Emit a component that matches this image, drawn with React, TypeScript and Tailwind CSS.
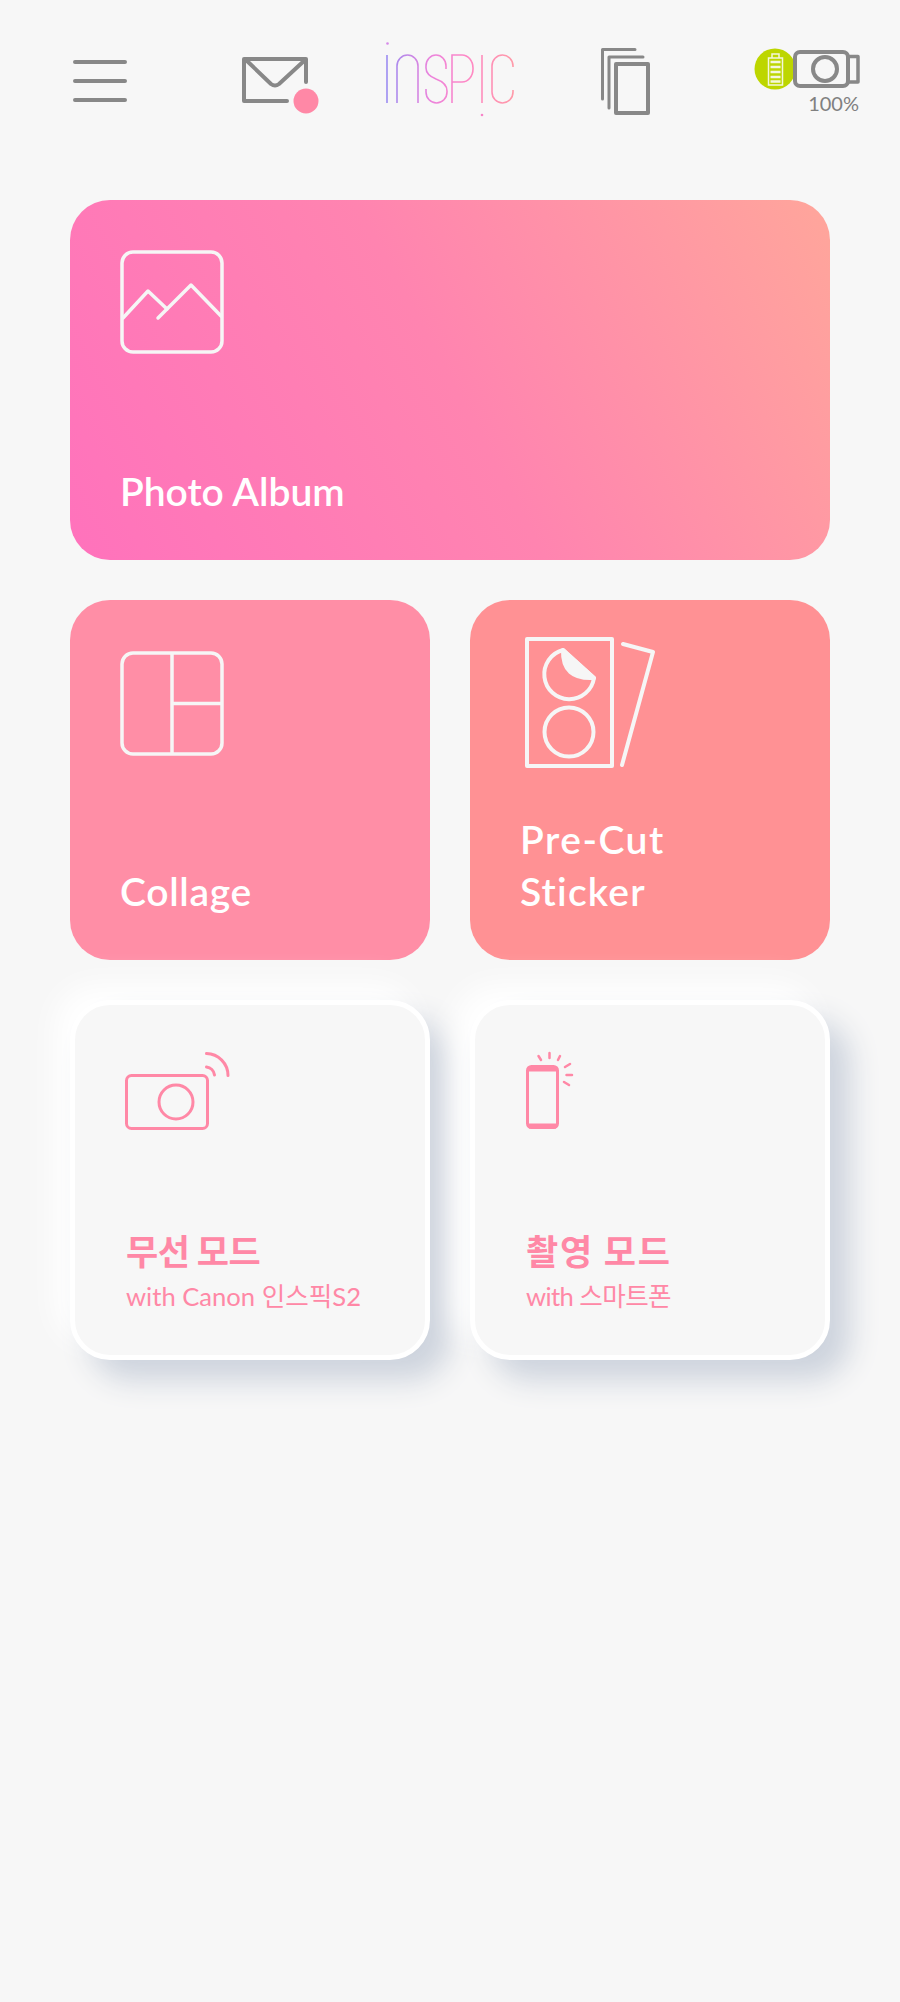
const PINK = "#ff88a6";
const GREY = "#888888";
const WHITE = "#f6f6f6";

function Header() {
  return (
    <header className="flex h-[200px] items-start pl-[70px] pt-[40px]">
      <svg width="60" height="90" viewBox="70 40 60 90" fill="none" stroke={GREY} strokeWidth="4" strokeLinecap="round">
        <path d="M75 62H125M75 81H125M75 100H125" />
      </svg>
      <svg className="ml-[110px]" width="80" height="90" viewBox="240 40 80 90" fill="none">
        <path d="M306 82V59H244V101H287" stroke={GREY} strokeWidth="4" strokeLinecap="round" strokeLinejoin="round" />
        <path d="M246 60L271 84Q275 87 279 84L305 60" stroke={GREY} strokeWidth="4" strokeLinecap="round" strokeLinejoin="round" />
        <circle cx="306" cy="101" r="12.5" fill={PINK} />
      </svg>
      <svg className="ml-[60px]" width="140" height="90" viewBox="380 40 140 90" fill="none" role="img" aria-label="INSPIC">
        <defs>
          <linearGradient id="logo" gradientUnits="userSpaceOnUse" x1="386" y1="0" x2="514" y2="0">
            <stop offset="0" stopColor="#9a8cf2" />
            <stop offset="0.35" stopColor="#ec84dc" />
            <stop offset="0.65" stopColor="#ff88c4" />
            <stop offset="1" stopColor="#ff9aa8" />
          </linearGradient>
        </defs>
        <g stroke="url(#logo)" strokeWidth="1.6">
          <path d="M387 55V103" />
          <path d="M397 103V66A10.5 11 0 0 1 418 66V103" />
          <path d="M446 69V66A10 11 0 0 0 426 66V68Q426 75 436 79Q447 83 447 91V92A10.5 11 0 0 1 426 92V89" />
          <path d="M452 103V55H462A11 13 0 0 1 473 68V69A11 13 0 0 1 462 82H452" />
          <path d="M482 55V103" />
          <path d="M513 67V66A10.5 11 0 0 0 492 66V92A10.5 11 0 0 0 513 92V90" />
        </g>
        <circle cx="387.5" cy="43.5" r="1.3" fill="#d68ae8" />
        <circle cx="482" cy="115" r="1.3" fill="#f784c8" />
      </svg>
      <svg className="ml-[78px]" width="56" height="90" viewBox="598 40 56 90" fill="none" stroke={GREY} strokeLinecap="round" strokeLinejoin="round">
        <path d="M602.5 99V49.5H635" strokeWidth="3" />
        <path d="M609 108V57H643" strokeWidth="3" />
        <rect x="616" y="64" width="32" height="49" strokeWidth="4" />
      </svg>
      <div className="ml-[96px] flex w-[114px] flex-col items-end">
        <svg width="114" height="52" viewBox="750 40 114 52" fill="none">
          <circle cx="775" cy="69" r="20.5" fill="#bdd600" />
          <g stroke="#f4f7dc" strokeWidth="1.5">
            <rect x="768.5" y="58" width="14" height="27" />
            <path d="M772 58V54H779V58" />
          </g>
          <path d="M770.5 62H780.5M770.5 67H780.5M770.5 72H780.5M770.5 77H780.5M770.5 81.5H780.5" stroke="#f4f7dc" strokeWidth="2.5" />
          <rect x="795" y="52" width="53" height="34" rx="5" stroke={GREY} strokeWidth="4" />
          <circle cx="825" cy="69" r="12" stroke={GREY} strokeWidth="4" />
          <path d="M849 56.5H858V82H849" stroke={GREY} strokeWidth="3.5" strokeLinejoin="round" />
        </svg>
        <span className="mr-[5px] -mt-[1px] font-['Lato',sans-serif] text-[20px] leading-[24px] font-normal text-[#808080]">100%</span>
      </div>
    </header>
  );
}

function Label({ children }: { children: React.ReactNode }) {
  return (
    <p className="font-['Lato','Noto_Sans_CJK_KR',sans-serif] text-[39px] leading-[52px] font-semibold text-white">
      {children}
    </p>
  );
}

function ModeCard({
  icon,
  title,
  sub,
  titleClass,
  subClass,
}: {
  icon: React.ReactNode;
  title: string;
  sub: string;
  titleClass: string;
  subClass: string;
}) {
  return (
    <section className="flex h-[360px] flex-col justify-between rounded-[40px] border-[5px] border-white bg-[#f7f7f7] pb-[43px] pl-[51px] pt-[45px] shadow-[20px_20px_30px_#cdd3dd,-15px_-15px_30px_#ffffff]">
      {icon}
      <div className="text-[#ff88a6]">
        <p className={`mb-[7px] font-['Noto_Sans_CJK_KR',sans-serif] text-[35px] leading-[46px] font-bold ${titleClass}`}>{title}</p>
        <p className={`font-['Lato','Noto_Sans_CJK_KR',sans-serif] text-[25.6px] leading-[32px] font-normal ${subClass}`}>{sub}</p>
      </div>
    </section>
  );
}

export default function App() {
  return (
    <div className="min-h-[2002px] w-[900px] bg-[#f7f7f7]">
      <Header />
      <main className="flex flex-col gap-[40px] px-[70px]">
        <section className="flex h-[360px] flex-col justify-between rounded-[40px] bg-[linear-gradient(62deg,#ff72bc_0%,#ff84b0_50%,#ffa69b_100%)] pb-[43px] pl-[50px] pt-[50px]">
          <svg width="104" height="104" viewBox="120 250 104 104" fill="none" stroke={WHITE} strokeWidth="3.5" strokeLinecap="round" strokeLinejoin="round">
            <rect x="122" y="252" width="100" height="100" rx="11" />
            <path d="M123 318L148 291L167 309" />
            <path d="M158 318L191 285L221 316" />
          </svg>
          <Label>Photo Album</Label>
        </section>
        <div className="grid grid-cols-2 gap-[40px]">
          <section className="flex h-[360px] flex-col justify-between rounded-[40px] bg-[#ff8ea6] pb-[43px] pl-[50px] pt-[50px]">
            <svg width="104" height="106" viewBox="120 650 104 106" fill="none" stroke={WHITE} strokeWidth="3.5">
              <rect x="122" y="653" width="100" height="101" rx="11" />
              <path d="M172 653V754M172 703.5H222" />
            </svg>
            <Label>
              <span className="tracking-[0.7px]">Collage</span>
            </Label>
          </section>
          <section className="flex h-[360px] flex-col justify-between rounded-[40px] bg-[#ff9194] pb-[43px] pl-[50px] pt-[36px]">
            <svg className="ml-[4px]" width="132" height="134" viewBox="524 636 132 134" fill="none" stroke={WHITE} strokeWidth="4" strokeLinecap="round" strokeLinejoin="round">
              <rect x="527" y="639" width="85" height="127" />
              <path d="M623 644L653 652L622 765" />
              <path d="M563 650A25 25 0 1 0 594 678L563 650" />
              <path d="M563 650Q562 680 594 678Z" fill={WHITE} />
              <circle cx="569" cy="732" r="24.5" />
            </svg>
            <Label>
              <span className="tracking-[1.5px]">Pre-Cut</span>
              <br />
              <span className="tracking-[1.2px]">Sticker</span>
            </Label>
          </section>
        </div>
        <div className="grid grid-cols-2 gap-[40px]">
          <ModeCard
            title="무선 모드"
            sub="with Canon 인스픽S2"
            titleClass="tracking-[-0.5px]"
            subClass="tracking-[0px]"
            icon={
              <svg className="-ml-[2px]" width="110" height="84" viewBox="124 1050 110 84" fill="none" stroke={PINK} strokeWidth="3" strokeLinecap="round">
                <rect x="126.5" y="1075.5" width="81" height="53" rx="5" />
                <circle cx="176" cy="1102" r="17" />
                <path d="M206.5 1053.5A22 22 0 0 1 228 1075.5" />
                <path d="M206.5 1067A9.5 9.5 0 0 1 214.5 1075" />
              </svg>
            }
          />
          <ModeCard
            title="촬영 모드"
            sub="with 스마트폰"
            titleClass="tracking-[1.8px]"
            subClass="tracking-[-0.6px]"
            icon={
              <svg className="-ml-[2px]" width="60" height="84" viewBox="524 1050 60 84" fill="none" stroke={PINK} strokeLinecap="round">
                <rect x="527.5" y="1066.5" width="30" height="61" rx="4" strokeWidth="3" />
                <path d="M529 1069H556M529 1126H556" strokeWidth="5" strokeLinecap="butt" />
                <path d="M538.5 1056L541 1060M549.5 1053V1058M560 1056L558 1060M570 1064L565 1067M572 1075H566.5M569 1085L564 1082" strokeWidth="2.5" />
              </svg>
            }
          />
        </div>
      </main>
    </div>
  );
}
